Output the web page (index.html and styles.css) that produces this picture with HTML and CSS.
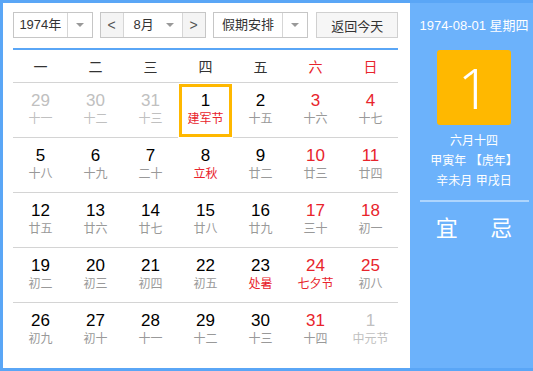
FILE: index.html
```html
<!DOCTYPE html>
<html lang="zh">
<head>
  <meta charset="UTF-8" />
  <title>万年历</title>
  <link rel="stylesheet" href="styles.css">
</head>
<body>
  <div class="calendar">
    <div class="main">
      <div class="toolbar">
        <div class="select year">
          <span class="value">1974年</span>
          <span class="arrow"></span>
        </div>
        <div class="month-group">
          <span class="nav">&lt;</span>
          <div class="select month">
            <span class="value">8月</span>
            <span class="arrow"></span>
          </div>
          <span class="nav">&gt;</span>
        </div>
        <div class="select holiday">
          <span class="value">假期安排</span>
          <span class="arrow"></span>
        </div>
        <button class="today">返回今天</button>
      </div>

      <div class="week">
        <span>一</span><span>二</span><span>三</span><span>四</span><span>五</span>
        <span class="red">六</span><span class="red">日</span>
      </div>

      <div id="days" class="days"></div>
    </div>

    <div class="side">
      <div class="side-date">1974-08-01 星期四</div>
      <div class="big-day">1</div>
      <div class="lunar-info">
        <p>六月十四</p>
        <p>甲寅年 【虎年】</p>
        <p>辛未月 甲戌日</p>
      </div>
      <div class="yiji">
        <span>宜</span>
        <span>忌</span>
      </div>
    </div>
  </div>

  <script>
    // [day, lunar, flags] -- o: other month, w: weekend, f: festival, s: selected
    const days = [
      ['29', '十一', 'o'], ['30', '十二', 'o'], ['31', '十三', 'o'], ['1', '建军节', 'fs'], ['2', '十五', ''], ['3', '十六', 'w'], ['4', '十七', 'w'],
      ['5', '十八', ''], ['6', '十九', ''], ['7', '二十', ''], ['8', '立秋', 'f'], ['9', '廿二', ''], ['10', '廿三', 'w'], ['11', '廿四', 'w'],
      ['12', '廿五', ''], ['13', '廿六', ''], ['14', '廿七', ''], ['15', '廿八', ''], ['16', '廿九', ''], ['17', '三十', 'w'], ['18', '初一', 'w'],
      ['19', '初二', ''], ['20', '初三', ''], ['21', '初四', ''], ['22', '初五', ''], ['23', '处暑', 'f'], ['24', '七夕节', 'wf'], ['25', '初八', 'w'],
      ['26', '初九', ''], ['27', '初十', ''], ['28', '十一', ''], ['29', '十二', ''], ['30', '十三', ''], ['31', '十四', 'w'], ['1', '中元节', 'o']
    ];

    const container = document.getElementById('days');
    days.forEach(([num, lunar, flags]) => {
      const cell = document.createElement('div');
      cell.className = 'day';
      if (flags.includes('o')) cell.classList.add('other');
      if (flags.includes('w')) cell.classList.add('weekend');
      if (flags.includes('f')) cell.classList.add('festival');
      if (flags.includes('s')) cell.classList.add('selected');
      cell.innerHTML = `<span class="num">${num}</span><span class="lunar">${lunar}</span>`;
      container.appendChild(cell);
    });
  </script>
</body>
</html>
```

FILE: styles.css
```css
:root {
  --blue: #5aa6f6;
  --panel: #6cb2fb;
  --orange: #ffb800;
  --red: #e8242c;
  --grey: #999999;
  --line: #d4d4d4;
}

* {
  box-sizing: border-box;
}

body {
  margin: 0;
  font-family: "Liberation Sans", "Noto Sans CJK SC", sans-serif;
  background: #ffffff;
}

.calendar {
  display: flex;
  width: 533px;
  height: 371px;
  border: 3px solid var(--blue);
  border-right: none;
}

.main {
  width: 407px;
  padding: 9px 12px 0 10px;
  background: #ffffff;
}

.toolbar {
  display: flex;
  align-items: center;
  height: 26px;
  font-size: 13px;
  color: #333;
}

.select {
  display: flex;
  align-items: center;
  height: 26px;
  border: 1px solid #c6c6c6;
  background: #fff;
}

.select .value {
  flex: 1;
  text-align: center;
  border-right: 1px solid #d6d6d6;
  line-height: 24px;
}

.select .arrow {
  width: 24px;
  height: 24px;
  position: relative;
}

.select .arrow::after {
  content: "";
  position: absolute;
  left: 8px;
  top: 10px;
  border-left: 4px solid transparent;
  border-right: 4px solid transparent;
  border-top: 4px solid #999;
}

.year {
  width: 80px;
}

.month-group {
  display: flex;
  margin-left: 7px;
  height: 26px;
  border: 1px solid #c6c6c6;
}

.month-group .nav {
  width: 22px;
  line-height: 24px;
  text-align: center;
  background: #f4f4f4;
  color: #555;
  font-size: 14px;
}

.month-group .select {
  width: 60px;
  height: 24px;
  border: none;
  border-left: 1px solid #d6d6d6;
  border-right: 1px solid #d6d6d6;
}

.month-group .select .value {
  border-right: none;
  padding-left: 6px;
}

.holiday {
  width: 96px;
  margin-left: 7px;
}

.today {
  margin-left: 8px;
  width: 82px;
  height: 26px;
  border: 1px solid #d0d0d0;
  background: #f6f6f6;
  font-family: inherit;
  font-size: 13px;
  color: #333;
  padding: 0;
}

.week {
  display: grid;
  grid-template-columns: repeat(7, 1fr);
  margin-top: 10px;
  border-top: 2px solid var(--blue);
  border-bottom: 1px solid var(--line);
  height: 35px;
  align-items: center;
  text-align: center;
  font-size: 14px;
  color: #333;
}

.red {
  color: var(--red);
}

.days {
  display: grid;
  grid-template-columns: repeat(7, 1fr);
  grid-auto-rows: 55px;
}

.day {
  display: flex;
  flex-direction: column;
  align-items: center;
  justify-content: center;
  border-bottom: 1px solid var(--line);
  padding-bottom: 2px;
}

.days .day:nth-last-child(-n+7) {
  border-bottom: none;
}

.num {
  font-size: 17px;
  line-height: 20px;
  color: #000;
}

.lunar {
  font-size: 12px;
  line-height: 17px;
  color: var(--grey);
}

.weekend .num {
  color: var(--red);
}

.festival .lunar {
  color: var(--red);
}

.other .num,
.other .lunar {
  color: #c0c0c0;
}

.selected {
  border: 3px solid var(--orange);
  margin: 1px 0 1px 1px;
  width: 53px;
}

.side {
  flex: 1;
  background: var(--panel);
  color: #fff;
  display: flex;
  flex-direction: column;
  align-items: center;
  padding: 15px 0 0 5px;
}

.side-date {
  font-size: 13px;
  line-height: 16px;
}

.big-day {
  width: 74px;
  height: 75px;
  margin-top: 16px;
  background: var(--orange);
  border-radius: 3px;
  font-size: 56px;
  line-height: 75px;
  text-align: center;
  font-family: "Noto Sans", sans-serif;
  font-weight: 300;
}

.lunar-info {
  margin-top: 6px;
  text-align: center;
  font-size: 12px;
  line-height: 20px;
}

.lunar-info p {
  margin: 0;
}

.yiji {
  width: 109px;
  margin-top: 9px;
  padding-top: 8px;
  border-top: 2px solid rgba(255, 255, 255, 0.45);
  display: flex;
  justify-content: space-around;
  font-size: 22px;
}
```
